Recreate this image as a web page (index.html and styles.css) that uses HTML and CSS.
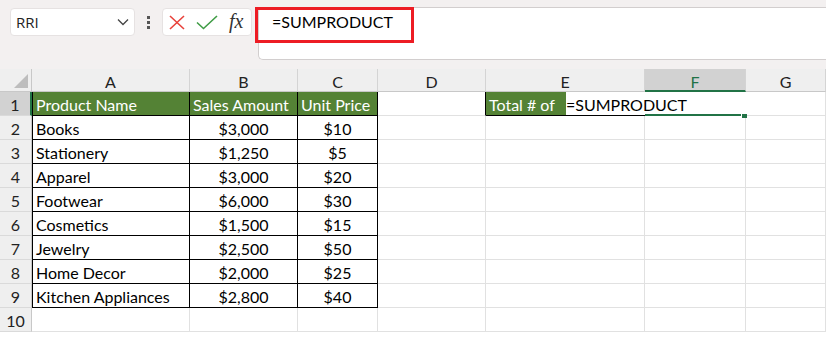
FILE: index.html
```html
<!DOCTYPE html>
<html lang="en">
<head>
    <meta charset="UTF-8">
    <title>Sheet</title>
    <link rel="stylesheet" href="styles.css">
</head>
<body>

<!-- Formula bar area -->
<div class="toolbar">
    <div class="name-box">
        <span>RRI</span>
        <svg width="12" height="8" viewBox="0 0 12 8"><polyline points="1,1.5 6,6.5 11,1.5" fill="none" stroke="#444" stroke-width="1.3"/></svg>
    </div>
    <div class="dots">
        <i></i><i></i><i></i>
    </div>
    <div class="fx-box">
        <svg width="16" height="15" viewBox="0 0 16 15"><path d="M1 1 L15 14 M15 1 L1 14" stroke="#e8423b" stroke-width="1.6" fill="none"/></svg>
        <svg width="22" height="15" viewBox="0 0 22 15"><polyline points="1,7.5 7.5,13.5 21,1" fill="none" stroke="#3f9c45" stroke-width="1.6"/></svg>
        <span class="fx">fx</span>
    </div>
    <div class="formula">
        <span class="formula-text">=SUMPRODUCT</span>
        <div class="mark"></div>
    </div>
</div>

<!-- Worksheet grid -->
<div class="sheet">
    <div class="corner"><i></i></div>
    <div class="col">A</div>
    <div class="col">B</div>
    <div class="col">C</div>
    <div class="col">D</div>
    <div class="col">E</div>
    <div class="col sel">F</div>
    <div class="col">G</div>

    <div class="row sel">1</div>
    <div class="c t first head">Product Name</div>
    <div class="c t head">Sales Amount</div>
    <div class="c t head">Unit Price</div>
    <div class="c dl"></div>
    <div class="c total"><span class="fill">Total # of</span><span class="edit">=SUMPRODUCT</span></div>
    <div class="c active"></div>
    <div class="c"></div>

    <div class="row">2</div>
    <div class="c t first">Books</div>
    <div class="c t num">$3,000</div>
    <div class="c t num">$10</div>
    <div class="c"></div><div class="c"></div><div class="c"></div><div class="c"></div>

    <div class="row">3</div>
    <div class="c t first">Stationery</div>
    <div class="c t num">$1,250</div>
    <div class="c t num">$5</div>
    <div class="c"></div><div class="c"></div><div class="c"></div><div class="c"></div>

    <div class="row">4</div>
    <div class="c t first">Apparel</div>
    <div class="c t num">$3,000</div>
    <div class="c t num">$20</div>
    <div class="c"></div><div class="c"></div><div class="c"></div><div class="c"></div>

    <div class="row">5</div>
    <div class="c t first">Footwear</div>
    <div class="c t num">$6,000</div>
    <div class="c t num">$30</div>
    <div class="c"></div><div class="c"></div><div class="c"></div><div class="c"></div>

    <div class="row">6</div>
    <div class="c t first">Cosmetics</div>
    <div class="c t num">$1,500</div>
    <div class="c t num">$15</div>
    <div class="c"></div><div class="c"></div><div class="c"></div><div class="c"></div>

    <div class="row">7</div>
    <div class="c t first">Jewelry</div>
    <div class="c t num">$2,500</div>
    <div class="c t num">$50</div>
    <div class="c"></div><div class="c"></div><div class="c"></div><div class="c"></div>

    <div class="row">8</div>
    <div class="c t first">Home Decor</div>
    <div class="c t num">$2,000</div>
    <div class="c t num">$25</div>
    <div class="c"></div><div class="c"></div><div class="c"></div><div class="c"></div>

    <div class="row">9</div>
    <div class="c t first">Kitchen Appliances</div>
    <div class="c t num">$2,800</div>
    <div class="c t num">$40</div>
    <div class="c"></div><div class="c"></div><div class="c"></div><div class="c"></div>

    <div class="row">10</div>
    <div class="c"></div><div class="c"></div><div class="c"></div><div class="c"></div>
    <div class="c"></div><div class="c"></div><div class="c"></div>
</div>

</body>
</html>
```

FILE: styles.css
```css
body {
    margin: 0;
    width: 826px;
    height: 339px;
    overflow: hidden;
    background-color: #ffffff;
    font-family: Lato, "Liberation Sans", sans-serif;
    color: #000;
}

/* top bar */
.toolbar {
    height: 69px;
    background-color: #f3f0f0;
    display: flex;
    align-items: flex-start;
    box-sizing: border-box;
    padding-top: 8px;
    padding-left: 10px;
}
.name-box {
    width: 125px;
    height: 28px;
    box-sizing: border-box;
    background-color: #fff;
    border-radius: 4px;
    border: 1px solid #e6e2e2;
    display: flex;
    align-items: center;
    justify-content: space-between;
    padding: 0 5px 0 5px;
    font-family: "Open Sans", sans-serif;
    font-size: 15px;
    color: #222;
}
.dots {
    width: 27px;
    height: 28px;
    display: flex;
    flex-direction: column;
    align-items: center;
    justify-content: center;
    gap: 2px;
}
.dots i {
    display: block;
    width: 3px;
    height: 3px;
    background-color: #555;
}
.fx-box {
    width: 90px;
    height: 28px;
    box-sizing: border-box;
    background-color: #fff;
    border-radius: 4px;
    border: 1px solid #e6e2e2;
    display: flex;
    align-items: center;
    padding-left: 6px;
    gap: 11px;
}
.fx {
    font-family: "Liberation Serif", serif;
    font-style: italic;
    font-size: 20px;
    color: #333;
    line-height: 1;
    margin-top: -3px;
}
.formula {
    position: relative;
    margin-left: 6px;
    margin-top: -1px;
    flex: 1;
    height: 53px;
    box-sizing: border-box;
    background-color: #fff;
    border: 1px solid #d2cece;
    border-right: none;
    border-radius: 5px 0 0 5px;
    padding: 4px 0 0 13px;
}
.formula-text {
    font-size: 16px;
    line-height: 20px;
}
.mark {
    position: absolute;
    left: -4px;
    top: -1px;
    width: 153px;
    height: 30px;
    border: 3px solid #ed1c24;
}

/* sheet */
.sheet {
    display: grid;
    grid-template-columns: 32px 158px 108px 80px 108px 159px 101px 80px;
    grid-template-rows: 23px;
    grid-auto-rows: 24px;
    font-size: 16px;
}
.sheet > div {
    box-sizing: border-box;
}
.corner {
    background-color: #efefef;
    border-right: 1px solid #c8c8c8;
    border-bottom: 1px solid #c8c8c8;
    position: relative;
}
.corner i {
    position: absolute;
    right: 3px;
    bottom: 3px;
    width: 0;
    height: 0;
    border-left: 14px solid transparent;
    border-bottom: 14px solid #bdbdbd;
}
.col {
    background-color: #efefef;
    border-right: 1px solid #d4d4d4;
    border-bottom: 1px solid #c8c8c8;
    text-align: center;
    line-height: 23px;
    padding-top: 1px;
    color: #222;
}
.col.sel {
    background-color: #d2d2d2;
    border-bottom: 2px solid #217346;
    color: #217346;
}
.row {
    background-color: #efefef;
    border-right: 1px solid #c8c8c8;
    border-bottom: 1px solid #dadada;
    text-align: center;
    line-height: 24px;
    padding-top: 1px;
    color: #222;
}
.row.sel {
    background-color: #d2d2d2;
    border-right: 2px solid #217346;
}
.c {
    border-right: 1px solid #e1e1e1;
    border-bottom: 1px solid #e1e1e1;
    line-height: 24px;
    padding-top: 1px;
    white-space: nowrap;
}
.c.t {
    border-right-color: #000;
    border-bottom-color: #000;
    padding-left: 3px;
}
.c.first {
    border-left: 1px solid #000;
}
.c.num {
    text-align: center;
    padding-left: 0;
}
.c.head {
    background-color: #548235;
    color: #fff;
}
.c.dl {
    border-right-color: #000;
}
.c.total {
    border-bottom-color: #000;
    border-right: none;
    padding-top: 0;
    display: flex;
}
.fill {
    width: 80px;
    flex-shrink: 0;
    box-sizing: border-box;
    padding: 1px 0 0 3px;
    background-color: #548235;
    color: #fff;
}
.edit {
    padding-top: 1px;
    background-color: #fff;
}
.c.active {
    position: relative;
    border-right: none;
    border-bottom: 2px solid #217346;
}
.c.active::after {
    content: "";
    position: absolute;
    right: -1px;
    bottom: -4px;
    width: 5px;
    height: 4px;
    background-color: #217346;
    border-left: 1px solid #fff;
}
```
